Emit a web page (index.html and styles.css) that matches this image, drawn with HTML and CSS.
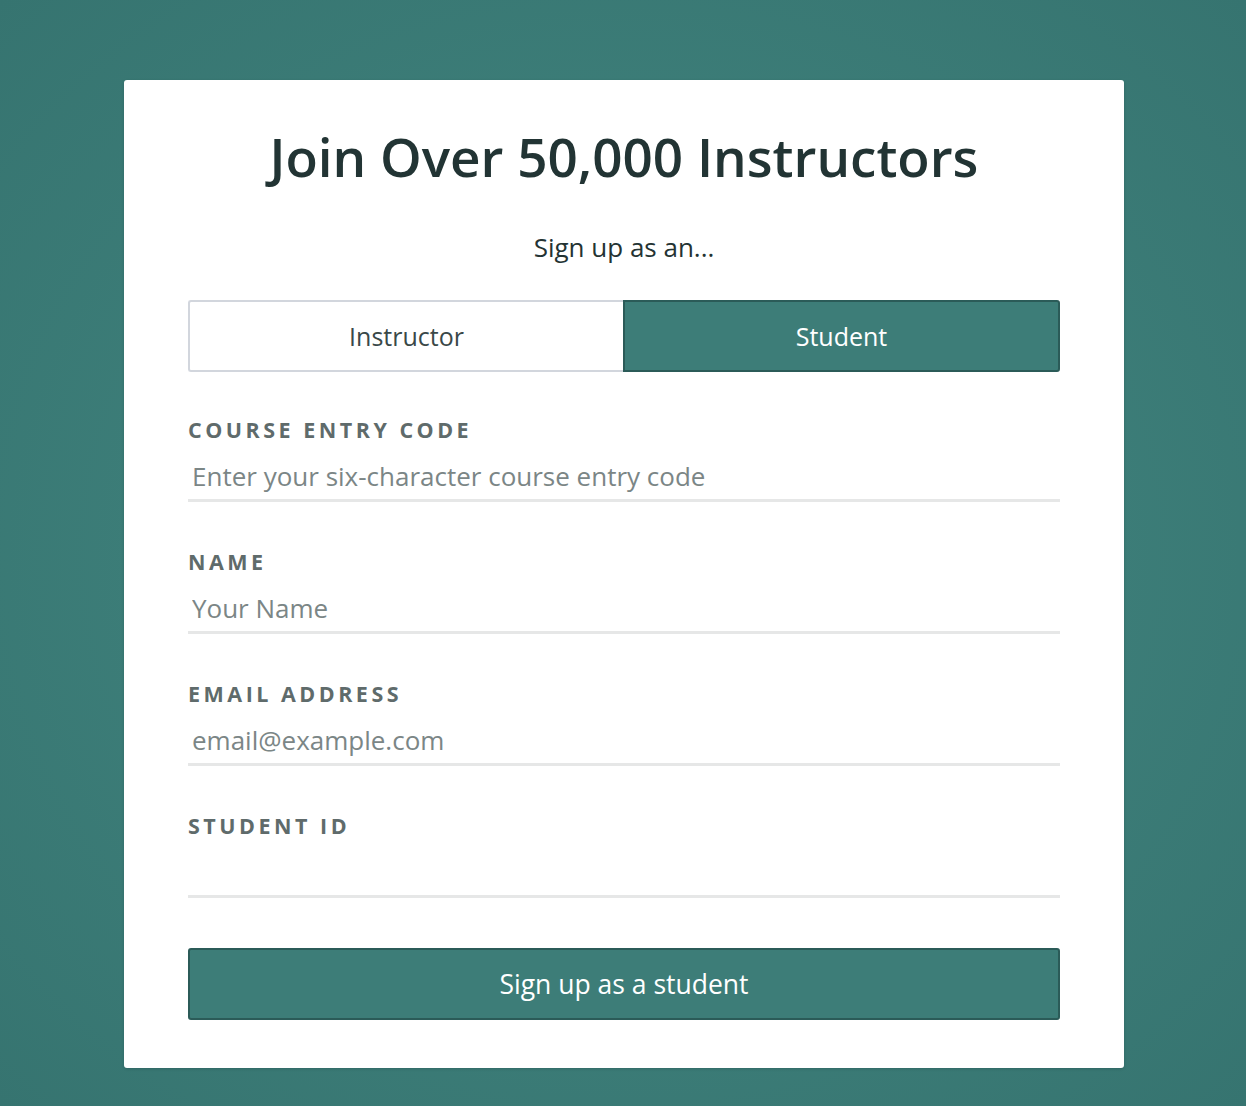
FILE: index.html
```html
<!DOCTYPE html>
<html lang="en">

<head>
    <meta charset="UTF-8">
    <meta name="viewport" content="width=device-width, initial-scale=1.0">
    <title>Sign Up</title>
    <link rel="stylesheet" href="styles.css">
</head>

<body>
    <div class="signup-card">
        <h1 class="signup-title">Join Over 50,000 Instructors</h1>
        <p class="signup-sub">Sign up as an...</p>

        <div class="role-toggle">
            <button class="role-btn">Instructor</button>
            <button class="role-btn active">Student</button>
        </div>

        <form class="signup-form">
            <div class="field">
                <label for="code">Course Entry Code</label>
                <input type="text" id="code" placeholder="Enter your six-character course entry code">
            </div>
            <div class="field">
                <label for="name">Name</label>
                <input type="text" id="name" placeholder="Your Name">
            </div>
            <div class="field">
                <label for="email">Email Address</label>
                <input type="email" id="email" placeholder="email@example.com">
            </div>
            <div class="field">
                <label for="student-id">Student ID</label>
                <input type="text" id="student-id">
            </div>

            <button type="submit" class="submit-btn">Sign up as a student</button>
        </form>
    </div>
</body>

</html>
```

FILE: styles.css
```css
html {
    min-height: 100%;
    background: radial-gradient(ellipse at center, #408681 0%, #3c7d78 55%, #367470 100%);
}

body {
    margin: 0;
    padding: 80px 0 38px 2px;
    font-family: "Open Sans", Lato, sans-serif;
    color: #243333;
}

.signup-card {
    width: 1000px;
    box-sizing: border-box;
    margin: 0 auto;
    background: #fff;
    border-radius: 3px;
    padding: 46px 64px 48px;
    box-shadow: 0 1px 3px rgba(0, 0, 0, 0.15);
}

.signup-title {
    margin: 0;
    text-align: center;
    font-size: 53px;
    line-height: 62px;
    font-weight: 600;
    color: #223434;
}

.signup-sub {
    margin: 44px 0 38px;
    text-align: center;
    font-size: 26px;
    line-height: 30px;
    color: #243333;
}

.role-toggle {
    display: flex;
}

.role-btn {
    flex: 1;
    height: 72px;
    font-family: inherit;
    font-size: 25px;
    color: #3a4848;
    background: #fff;
    border: 2px solid #d2d6dd;
    cursor: pointer;
}

.role-btn:first-child {
    border-radius: 3px 0 0 3px;
    border-right: none;
}

.role-btn:last-child {
    border-radius: 0 3px 3px 0;
}

.role-btn.active {
    background: #3d7d78;
    border-color: #2b5b58;
    color: #fff;
}

.signup-form {
    margin-top: 46px;
}

.field {
    margin-bottom: 48px;
}

.field label {
    display: block;
    margin-bottom: 6px;
    font-size: 21.5px;
    line-height: 24px;
    font-weight: 700;
    letter-spacing: 3.5px;
    text-transform: uppercase;
    color: #5f6b6b;
}

.field input {
    display: block;
    width: 100%;
    box-sizing: border-box;
    height: 54px;
    padding: 4px 4px 0;
    font-family: inherit;
    font-size: 26px;
    color: #243333;
    border: none;
    border-bottom: 3px solid #e6e7e7;
    outline: none;
}

.field input::placeholder {
    color: #7b8686;
}

.field:last-of-type {
    margin-bottom: 50px;
}

.submit-btn {
    display: block;
    width: 100%;
    height: 72px;
    font-family: inherit;
    font-size: 26.5px;
    color: #fff;
    background: #3d7d78;
    border: 2px solid #2b5b58;
    border-radius: 3px;
    cursor: pointer;
}
```
